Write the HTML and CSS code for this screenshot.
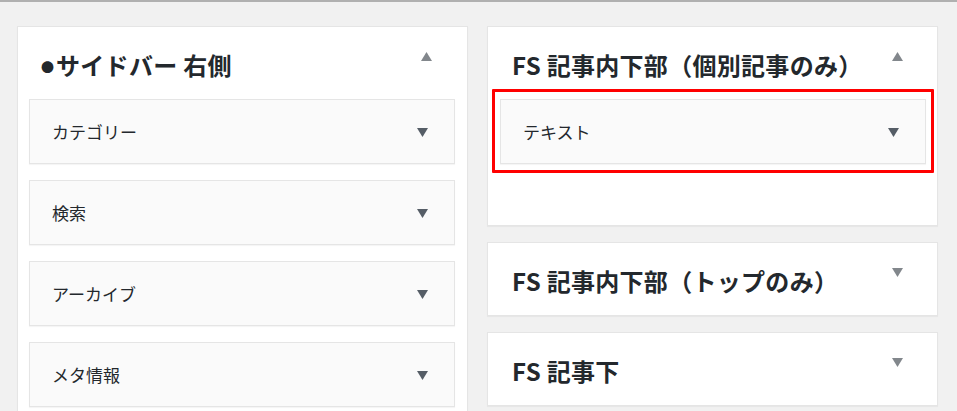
FILE: index.html
```html
<!DOCTYPE html>
<html lang="ja">
<head>
<meta charset="utf-8">
<link rel="stylesheet" href="styles.css">
</head>
<body>
<div class="page">
  <div class="column">
    <div class="sidebar sidebar-left">
      <div class="sidebar-head">
        <h2 class="sidebar-title"><span class="bullet">●</span>サイドバー 右側</h2>
        <svg class="toggle" width="11" height="9" viewBox="0 0 11 9"><polygon points="5.5,0 11,9 0,9" fill="#82878c"/></svg>
      </div>
      <div class="widget"><span class="widget-title">カテゴリー</span><svg class="wtoggle" width="11" height="9" viewBox="0 0 11 9"><polygon points="0,0 11,0 5.5,9" fill="#555d66"/></svg></div>
      <div class="widget"><span class="widget-title">検索</span><svg class="wtoggle" width="11" height="9" viewBox="0 0 11 9"><polygon points="0,0 11,0 5.5,9" fill="#555d66"/></svg></div>
      <div class="widget"><span class="widget-title">アーカイブ</span><svg class="wtoggle" width="11" height="9" viewBox="0 0 11 9"><polygon points="0,0 11,0 5.5,9" fill="#555d66"/></svg></div>
      <div class="widget"><span class="widget-title">メタ情報</span><svg class="wtoggle" width="11" height="9" viewBox="0 0 11 9"><polygon points="0,0 11,0 5.5,9" fill="#555d66"/></svg></div>
    </div>
  </div>
  <div class="column">
    <div class="sidebar sidebar-right open">
      <div class="sidebar-head">
        <h2 class="sidebar-title">FS 記事内下部（個別記事のみ）</h2>
        <svg class="toggle" width="11" height="9" viewBox="0 0 11 9"><polygon points="5.5,0 11,9 0,9" fill="#82878c"/></svg>
      </div>
      <div class="widget highlighted"><span class="widget-title">テキスト</span><svg class="wtoggle" width="11" height="9" viewBox="0 0 11 9"><polygon points="0,0 11,0 5.5,9" fill="#555d66"/></svg><div class="mark"></div></div>
    </div>
    <div class="sidebar sidebar-right closed">
      <div class="sidebar-head">
        <h2 class="sidebar-title">FS 記事内下部（トップのみ）</h2>
        <svg class="toggle" width="11" height="9" viewBox="0 0 11 9"><polygon points="0,0 11,0 5.5,9" fill="#82878c"/></svg>
      </div>
    </div>
    <div class="sidebar sidebar-right closed">
      <div class="sidebar-head">
        <h2 class="sidebar-title">FS 記事下</h2>
        <svg class="toggle" width="11" height="9" viewBox="0 0 11 9"><polygon points="0,0 11,0 5.5,9" fill="#82878c"/></svg>
      </div>
    </div>
  </div>
</div>
</body>
</html>
```

FILE: styles.css
```css
html, body {
  margin: 0;
  padding: 0;
}
body {
  background: #f1f1f1;
  border-top: 2px solid #b0b0b0;
  font-family: "Noto Sans CJK JP", "Noto Sans", sans-serif;
  color: #23282d;
  height: 409px;
  overflow: hidden;
}
.page {
  display: flex;
  gap: 19px;
  padding: 24px 0 0 17px;
}
.column {
  width: 451px;
  display: flex;
  flex-direction: column;
  gap: 16px;
}
.sidebar {
  box-sizing: border-box;
  width: 451px;
  background: #fff;
  border: 1px solid #e5e5e5;
  box-shadow: 0 1px 1px rgba(0, 0, 0, 0.04);
}
.sidebar-left {
  padding: 0 12px 0 11px;
}
.sidebar-right {
  padding: 0 11px 0 12px;
}
.sidebar-right.open {
  padding-bottom: 61px;
}
.sidebar-head {
  height: 72px;
  display: flex;
  justify-content: space-between;
  align-items: flex-start;
  box-sizing: border-box;
  padding-left: 12px;
}
.sidebar-title {
  margin: 0;
  padding-top: 22px;
  font-size: 24px;
  line-height: 32px;
  font-weight: 700;
  white-space: nowrap;
  color: #23282d;
  letter-spacing: 0.3px;
}
.bullet {
  font-size: 13px;
  display: inline-block;
  width: 15px;
  vertical-align: 3px;
}
.toggle {
  margin-top: 25px;
  margin-right: 23px;
  flex: none;
}
.widget {
  position: relative;
  box-sizing: border-box;
  height: 65px;
  background: #fafafa;
  border: 1px solid #e5e5e5;
  box-shadow: 0 1px 1px rgba(0, 0, 0, 0.04);
  display: flex;
  align-items: center;
  justify-content: space-between;
  padding: 0 26px 0 22px;
  margin-bottom: 16px;
}
.sidebar-right .widget {
  margin-bottom: 0;
}
.widget-title {
  font-size: 17px;
  line-height: 24px;
  color: #23282d;
}
.wtoggle {
  flex: none;
  margin-top: 1px;
}
.mark {
  position: absolute;
  top: -11px;
  left: -9px;
  right: -9px;
  bottom: -10px;
  border: 3px solid #ff0000;
  border-radius: 1px;
}
```
